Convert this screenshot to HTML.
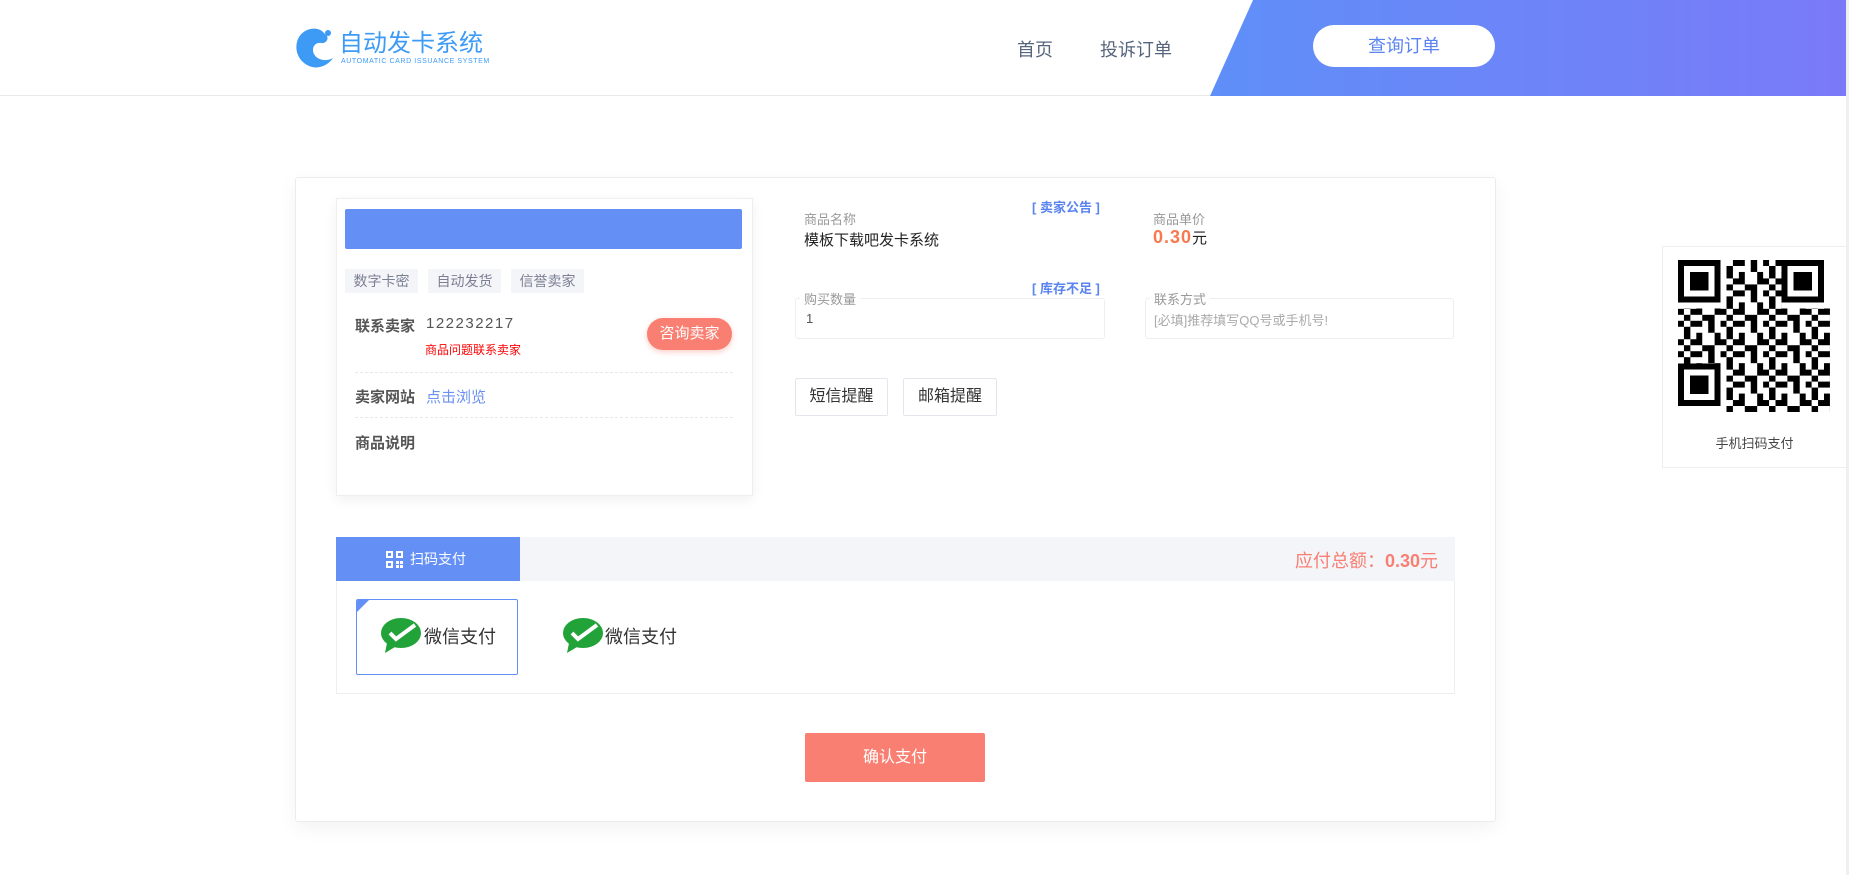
<!DOCTYPE html>
<html><head><meta charset="utf-8"><style>
*{margin:0;padding:0;box-sizing:border-box}
body{width:1849px;height:875px;position:relative;overflow:hidden;background:#fff;font-family:"Liberation Sans","Noto Sans CJK SC",sans-serif;color:#333}
.a{position:absolute}
.hdr{left:0;top:0;width:1849px;height:96px;border-bottom:1px solid #e8e8e8}
.grad{left:1210px;top:0;width:639px;height:96px;background:linear-gradient(90deg,#5f8ff8,#7a7af8);clip-path:polygon(43px 0,100% 0,100% 100%,0 100%)}
.nav{top:36px;font-size:18px;color:#56657d}
.qbtn{left:1313px;top:25px;width:182px;height:42px;background:#fff;border-radius:21px;color:#5b84f0;font-size:18px;text-align:center;line-height:42px}
.card{left:295px;top:177px;width:1201px;height:645px;border:1px solid #ececec;border-radius:3px;box-shadow:0 6px 20px rgba(0,0,0,.05)}
.sub{left:336px;top:198px;width:417px;height:298px;border:1px solid #eee;box-shadow:0 4px 12px rgba(0,0,0,.06)}
.tag{top:269px;height:24px;line-height:24px;background:#f4f5f9;color:#7a8092;font-size:14px;text-align:center;width:73px}
.lbl{font-size:15px;font-weight:bold;color:#555}
.dash{left:355px;width:378px;border-top:1px dashed #e8e8e8}
.gl{font-size:13px;color:#999}
.bl{font-size:13px;color:#5b84f0;font-weight:bold}
.box{height:41px;border:1px solid #eee;border-radius:3px}
.leg{background:#fff;padding:0 4px;font-size:13px;color:#999;top:-10px;left:4px}
.btn{top:378px;height:38px;border:1px solid #e4e6ee;border-radius:2px;font-size:16px;color:#333;text-align:center;line-height:36px}
</style></head><body>
<div class="a hdr"></div>
<div class="a grad"></div>
<svg class="a" style="left:295px;top:26px" width="42" height="44" viewBox="0 0 42 44"><path d="M28 6C22 0 8 2 3 13C-2 25 5 38 17 41C26 43 34 38 38 32C31 36 22 34 19 28C16 22 20 16 26 17C30 18 34 14 32 10Z" fill="#3d9bf6"/><circle cx="33" cy="7" r="3" fill="#3d9bf6"/></svg>
<div class="a" style="left:339px;top:31px;font-size:24px;color:#3d9bf6;letter-spacing:0px;line-height:26px">自动发卡系统</div>
<div class="a" style="left:341px;top:58px;font-size:7px;color:#3d9bf6;letter-spacing:0.6px">AUTOMATIC CARD ISSUANCE SYSTEM</div>
<div class="a nav" style="left:1017px">首页</div>
<div class="a nav" style="left:1100px">投诉订单</div>
<div class="a qbtn">查询订单</div>
<div class="a" style="left:1846px;top:0;width:3px;height:875px;background:#f0f0f0"></div>

<div class="a card"></div>
<div class="a sub"></div>
<div class="a" style="left:345px;top:209px;width:397px;height:40px;background:#6490f6;border-radius:2px"></div>
<div class="a tag" style="left:345px">数字卡密</div>
<div class="a tag" style="left:428px">自动发货</div>
<div class="a tag" style="left:511px">信誉卖家</div>
<div class="a lbl" style="left:355px;top:315px">联系卖家</div>
<div class="a" style="left:426px;top:315px;font-size:15px;color:#555;letter-spacing:1.5px">122232217</div>
<div class="a" style="left:425px;top:341px;font-size:12px;color:#f00">商品问题联系卖家</div>
<div class="a" style="left:647px;top:318px;width:85px;height:32px;border-radius:16px;background:#f87f72;color:#fff;font-size:15px;text-align:center;line-height:32px;box-shadow:0 2px 6px rgba(248,127,114,.4)">咨询卖家</div>
<div class="a dash" style="top:372px"></div>
<div class="a lbl" style="left:355px;top:386px">卖家网站</div>
<div class="a" style="left:426px;top:386px;font-size:15px;color:#6b8ff2">点击浏览</div>
<div class="a dash" style="top:417px"></div>
<div class="a lbl" style="left:355px;top:432px">商品说明</div>

<div class="a bl" style="left:1032px;top:197px">[ 卖家公告 ]</div>
<div class="a gl" style="left:804px;top:209px">商品名称</div>
<div class="a" style="left:804px;top:229px;font-size:15px;color:#222">模板下载吧发卡系统</div>
<div class="a gl" style="left:1153px;top:209px">商品单价</div>
<div class="a" style="left:1153px;top:227px;font-size:15px;color:#222"><b style="color:#f7794d;font-size:18px;letter-spacing:1px">0.30</b>元</div>
<div class="a bl" style="left:1032px;top:278px">[ 库存不足 ]</div>
<div class="a box" style="left:795px;top:298px;width:310px"><span class="a leg">购买数量</span><span class="a" style="left:10px;top:12px;font-size:13px;color:#555">1</span></div>
<div class="a box" style="left:1145px;top:298px;width:309px"><span class="a leg">联系方式</span><span class="a" style="left:8px;top:11px;font-size:13px;color:#aaa">[必填]推荐填写QQ号或手机号!</span></div>
<div class="a btn" style="left:795px;width:93px">短信提醒</div>
<div class="a btn" style="left:903px;width:94px">邮箱提醒</div>

<div class="a" style="left:336px;top:537px;width:1119px;height:157px;border:1px solid #eee"></div>
<div class="a" style="left:336px;top:537px;width:1119px;height:44px;background:#f4f5f9"></div>
<div class="a" style="left:336px;top:537px;width:184px;height:44px;background:#6490f6;color:#fff;font-size:14px;line-height:44px;padding-left:74px">扫码支付</div>
<svg class="a" style="left:386px;top:551px" width="17" height="17" viewBox="0 0 17 17" fill="#fff"><path d="M0 0h7v7H0zM2 2v3h3V2zM10 0h7v7h-7zM12 2v3h3V2zM0 10h7v7H0zM2 12v3h3v-3zM10 10h3v3h-3zM14 10h3v3h-3zM10 14h3v3h-3zM14 14h3v3h-3z"/></svg>
<div class="a" style="right:411px;top:547px;font-size:18px;color:#f87f72">应付总额：<b>0.30</b>元</div>
<div class="a" style="left:356px;top:599px;width:162px;height:76px;border:1px solid #6490f6;border-radius:2px;overflow:hidden"><div class="a" style="left:0;top:0;width:0;height:0;border-top:12px solid #6490f6;border-right:12px solid transparent"></div></div>
<svg class="a" style="left:381px;top:617px" width="42" height="38" viewBox="0 0 42 38"><ellipse cx="20" cy="16" rx="20" ry="15" fill="#22a33a"/><path d="M6 26l-2 10 10-6z" fill="#22a33a"/><path d="M9 16l6 6L34 8" stroke="#fff" stroke-width="4" fill="none"/></svg>
<div class="a" style="left:424px;top:623px;font-size:18px;color:#333">微信支付</div>
<svg class="a" style="left:563px;top:617px" width="42" height="38" viewBox="0 0 42 38"><ellipse cx="20" cy="16" rx="20" ry="15" fill="#22a33a"/><path d="M6 26l-2 10 10-6z" fill="#22a33a"/><path d="M9 16l6 6L34 8" stroke="#fff" stroke-width="4" fill="none"/></svg>
<div class="a" style="left:605px;top:623px;font-size:18px;color:#333">微信支付</div>
<div class="a" style="left:805px;top:733px;width:180px;height:49px;background:#f87f72;color:#fff;font-size:16px;text-align:center;line-height:49px;border-radius:2px">确认支付</div>

<div class="a" style="left:1662px;top:246px;width:185px;height:222px;border:1px solid #eee;background:#fff"></div>
<svg class="a" style="left:1678px;top:259px" width="152" height="154" viewBox="0 0 25 25" shape-rendering="crispEdges">
<defs><pattern id="p" width="7" height="5" patternUnits="userSpaceOnUse"><path d="M0 0h1v1H0zM2 0h2v1H2zM5 0h1v2H5zM1 1h1v2H1zM3 2h1v1H3zM6 2h1v2H6zM0 3h1v1H0zM2 3h2v1H2zM4 4h2v1H4zM1 4h1v1H1z" fill="#000"/></pattern></defs>
<rect width="25" height="25" fill="url(#p)"/>
<g fill="#fff"><rect width="8" height="8"/><rect x="17" width="8" height="8"/><rect y="17" width="8" height="8"/></g>
<g fill="#000"><path d="M0 0h7v7H0zM17 0h7v7h-7zM0 17h7v7H0z"/></g>
<g fill="#fff"><path d="M1 1h5v5H1zM18 1h5v5h-5zM1 18h5v5H1z"/></g>
<g fill="#000"><path d="M2 2h3v3H2zM19 2h3v3h-3zM2 19h3v3H2z"/></g>
</svg>
<div class="a" style="left:1662px;top:433px;width:185px;text-align:center;font-size:13px;color:#444">手机扫码支付</div>
</body></html>
